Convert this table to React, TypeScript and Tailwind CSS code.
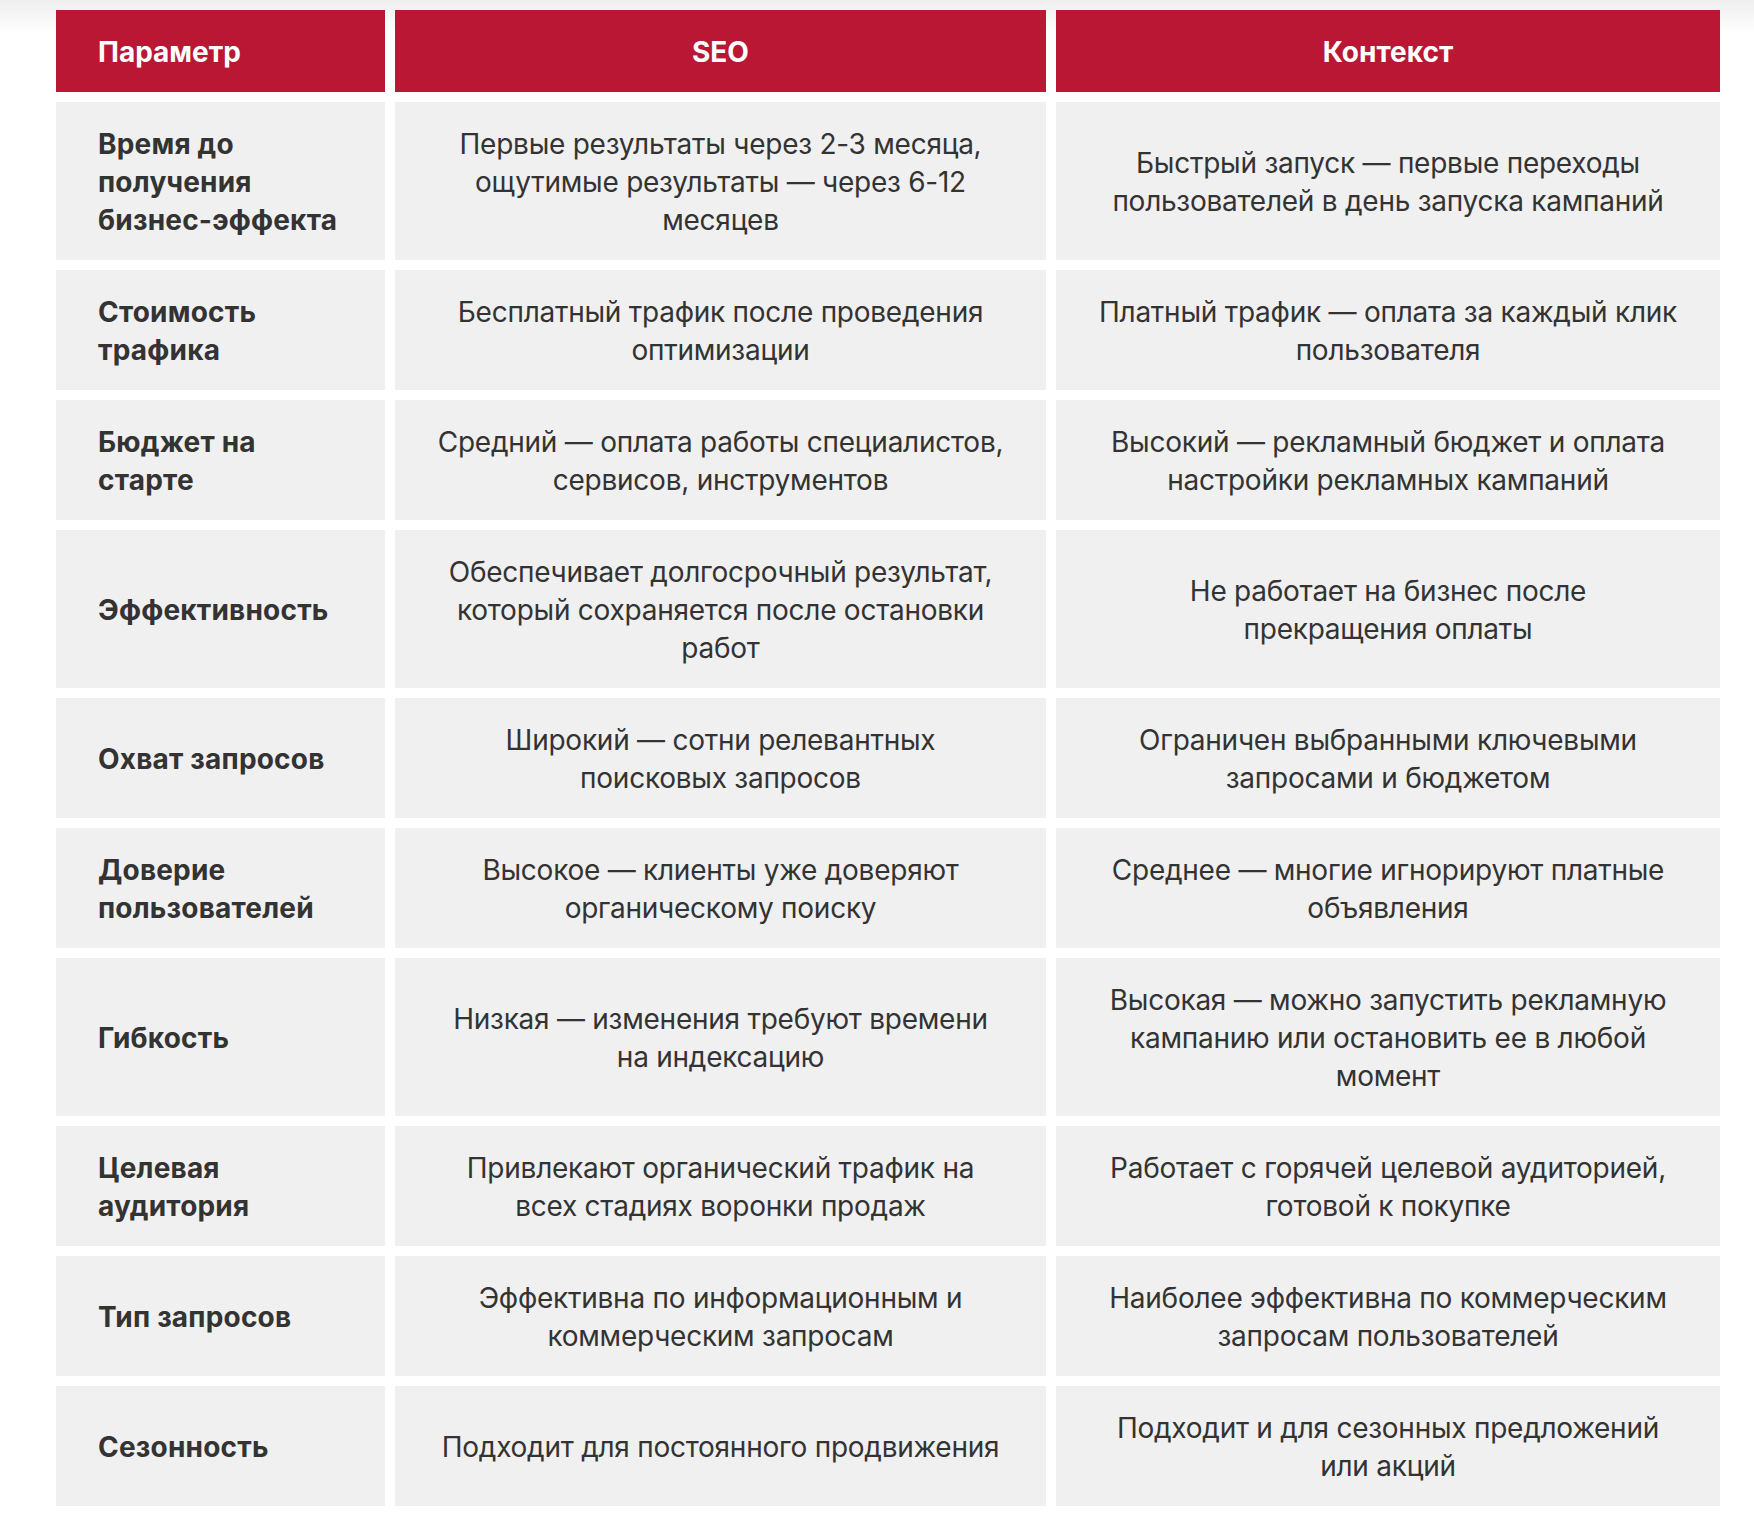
import React from "react";

const rows: [string, string, string][] = [
  [
    "Время до получения бизнес-эффекта",
    "Первые результаты через 2-3 месяца, ощутимые результаты — через 6-12 месяцев",
    "Быстрый запуск — первые переходы пользователей в день запуска кампаний",
  ],
  [
    "Стоимость трафика",
    "Бесплатный трафик после проведения оптимизации",
    "Платный трафик — оплата за каждый клик пользователя",
  ],
  [
    "Бюджет на старте",
    "Средний — оплата работы специалистов, сервисов, инструментов",
    "Высокий — рекламный бюджет и оплата настройки рекламных кампаний",
  ],
  [
    "Эффективность",
    "Обеспечивает долгосрочный результат, который сохраняется после остановки работ",
    "Не работает на бизнес после прекращения оплаты",
  ],
  [
    "Охват запросов",
    "Широкий — сотни релевантных поисковых запросов",
    "Ограничен выбранными ключевыми запросами и бюджетом",
  ],
  [
    "Доверие пользователей",
    "Высокое — клиенты уже доверяют органическому поиску",
    "Среднее — многие игнорируют платные объявления",
  ],
  [
    "Гибкость",
    "Низкая — изменения требуют времени на индексацию",
    "Высокая — можно запустить рекламную кампанию или остановить ее в любой момент",
  ],
  [
    "Целевая аудитория",
    "Привлекают органический трафик на всех стадиях воронки продаж",
    "Работает с горячей целевой аудиторией, готовой к покупке",
  ],
  [
    "Тип запросов",
    "Эффективна по информационным и коммерческим запросам",
    "Наиболее эффективна по коммерческим запросам пользователей",
  ],
  [
    "Сезонность",
    "Подходит для постоянного продвижения",
    "Подходит и для сезонных предложений или акций",
  ],
];

export default function App() {
  return (
    <div
      className="relative min-h-[1516px] w-[1754px] bg-white"
      style={{ fontFamily: "Inter, Roboto, 'Noto Sans', sans-serif" }}
    >
      <div className="absolute left-0 top-0 h-[34px] w-full bg-gradient-to-b from-[#efefef] to-white" />
      <div className="relative ml-[56px] pt-[10px]">
        <div className="grid grid-cols-[329px_651px_664px] gap-[10px] text-[28px] leading-[38px]">
          <div className="flex items-center bg-[#b91734] px-[42px] pt-[23px] pb-[21px] font-bold text-white">
            Параметр
          </div>
          <div className="flex items-center justify-center bg-[#b91734] px-[42px] pt-[23px] pb-[21px] text-center font-bold text-white">
            SEO
          </div>
          <div className="flex items-center justify-center bg-[#b91734] px-[42px] pt-[23px] pb-[21px] text-center font-bold text-white">
            Контекст
          </div>
          {rows.map((r, i) => (
            <React.Fragment key={i}>
              <div className="flex items-center bg-[#f0f0f0] px-[42px] pt-[23px] pb-[21px] font-bold tracking-[0.2px] text-[#333333]">
                {r[0]}
              </div>
              <div className="flex items-center justify-center bg-[#f0f0f0] px-[42px] pt-[23px] pb-[21px] text-center tracking-[-0.25px] text-[#333333]">
                {r[1]}
              </div>
              <div className="flex items-center justify-center bg-[#f0f0f0] px-[42px] pt-[23px] pb-[21px] text-center tracking-[-0.25px] text-[#333333]">
                {r[2]}
              </div>
            </React.Fragment>
          ))}
        </div>
      </div>
    </div>
  );
}
